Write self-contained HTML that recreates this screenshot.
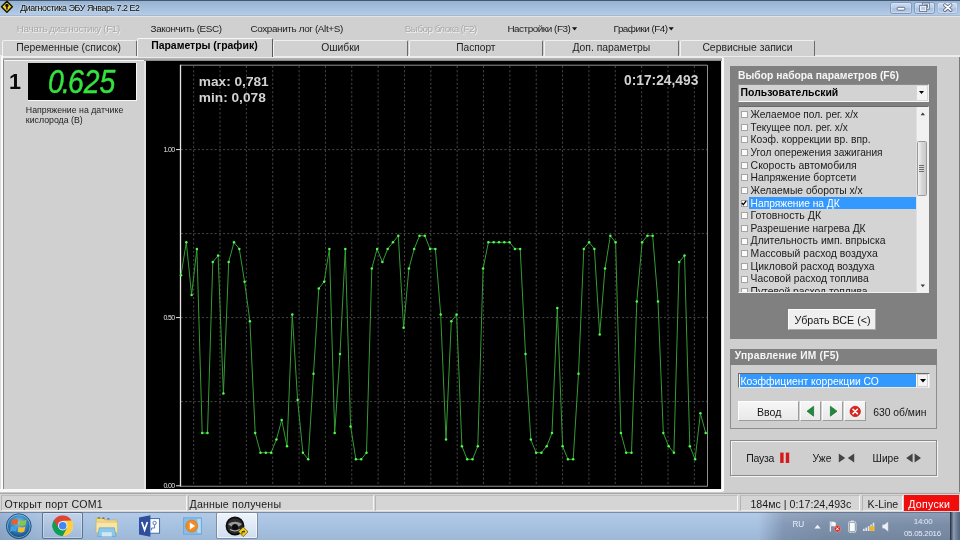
<!DOCTYPE html>
<html lang="ru"><head><meta charset="utf-8"><title>Диагностика ЭБУ Январь 7.2 E2</title>
<style>
html,body{margin:0;padding:0}
body{width:960px;height:540px;overflow:hidden;position:relative;background:#d4d4d4;font-family:"Liberation Sans",sans-serif}
#r{position:absolute;left:0;top:0;width:960px;height:540px;overflow:hidden;will-change:transform}
#r div{position:absolute;box-sizing:border-box}
#r svg{position:absolute;overflow:visible}
.t{position:absolute;white-space:nowrap;line-height:1;display:block}
</style></head>
<body><div id="r">
<div style="left:0px;top:0px;width:960px;height:17px;background:linear-gradient(#93b2d2 0%,#9fb9d8 30%,#a9c3e0 60%,#b3cde8 88%,#b3cde8 100%);"></div>
<div style="left:0px;top:0px;width:960px;height:1.2px;background:#46566f;"></div>
<div style="left:0px;top:14.9px;width:960px;height:0.9px;background:#a9b8cf;"></div>
<div style="left:0px;top:15.8px;width:960px;height:1.4px;background:#e1e4e9;"></div>
<svg style="left:0px;top:0px" width="14" height="14" viewBox="0 0 14 14"><path d="M6.9 1.2 L12.3 6.7 L6.9 12.2 L1.5 6.7 Z" fill="#f4d31f" stroke="#15130a" stroke-width="1.5" stroke-linejoin="round"/><circle cx="6.9" cy="5.4" r="1.7" fill="#15130a"/><path d="M6.9 5.6 L6.9 9.6" stroke="#15130a" stroke-width="1.5"/></svg>
<span class="t" style="left:20.20px;top:3px;font-size:8.8px;line-height:10px;color:#050505;letter-spacing:-0.417px;text-shadow:0 0 3px rgba(255,255,255,0.75),0 0 2px rgba(255,255,255,0.6);">Диагностика ЭБУ Январь 7.2 E2</span>
<div style="left:890.4px;top:2px;width:21.4px;height:11.6px;background:linear-gradient(#cddcf0,#b9cde8 48%,#a9c1e0 52%,#b6cbe7);border:1px solid #8098bd;border-radius:2.5px;box-shadow:inset 0 0 0 0.8px rgba(255,255,255,0.35)"></div>
<div style="left:913.6px;top:2px;width:21.4px;height:11.6px;background:linear-gradient(#cddcf0,#b9cde8 48%,#a9c1e0 52%,#b6cbe7);border:1px solid #8098bd;border-radius:2.5px;box-shadow:inset 0 0 0 0.8px rgba(255,255,255,0.35)"></div>
<div style="left:937.4px;top:2px;width:21px;height:11.6px;background:linear-gradient(#cddcf0,#b9cde8 48%,#a9c1e0 52%,#b6cbe7);border:1px solid #a3b6d3;border-radius:2.5px;box-shadow:inset 0 0 0 0.8px rgba(255,255,255,0.35)"></div>
<svg style="left:890px;top:2px" width="70" height="12" viewBox="0 0 70 12"><rect x="7.2" y="5.3" width="7.6" height="2.9" rx="0.9" fill="#fbfcfe" stroke="#56637a" stroke-width="0.9"/><rect x="33.2" y="1.9" width="5.2" height="4.4" fill="none" stroke="#56637a" stroke-width="2.5"/><rect x="33.2" y="1.9" width="5.2" height="4.4" fill="none" stroke="#fbfcfe" stroke-width="1"/><rect x="30.6" y="4.3" width="5.2" height="4.4" fill="#b9cce6" stroke="#56637a" stroke-width="2.5"/><rect x="30.6" y="4.3" width="5.2" height="4.4" fill="#b9cce6" stroke="#fbfcfe" stroke-width="1"/><path d="M54.8 3 L60.8 8.2 M60.8 3 L54.8 8.2" stroke="#56637a" stroke-width="3.3" stroke-linecap="round"/><path d="M54.8 3 L60.8 8.2 M60.8 3 L54.8 8.2" stroke="#fbfcfe" stroke-width="1.7" stroke-linecap="round"/></svg>
<div style="left:0px;top:17px;width:960px;height:42px;background:#d0d0d0;"></div>
<span class="t" style="left:16.80px;top:23px;font-size:9.9px;line-height:11px;color:#a9a9a9;letter-spacing:-0.380px;text-shadow:0.7px 0.7px 0 #f4f4f4;">Начать диагностику (F1)</span>
<span class="t" style="left:150.60px;top:23px;font-size:9.9px;line-height:11px;color:#1c1c1c;letter-spacing:-0.386px;">Закончить (ESC)</span>
<span class="t" style="left:250.40px;top:23px;font-size:9.9px;line-height:11px;color:#1c1c1c;letter-spacing:-0.356px;">Сохранить лог (Alt+S)</span>
<span class="t" style="left:404.80px;top:23px;font-size:9.9px;line-height:11px;color:#a9a9a9;letter-spacing:-0.533px;text-shadow:0.7px 0.7px 0 #f4f4f4;">Выбор блока (F2)</span>
<span class="t" style="left:507.40px;top:23px;font-size:9.9px;line-height:11px;color:#1c1c1c;letter-spacing:-0.448px;">Настройки (F3)</span>
<span class="t" style="left:613.60px;top:23px;font-size:9.9px;line-height:11px;color:#1c1c1c;letter-spacing:-0.509px;">Графики (F4)</span>
<svg style="left:571px;top:26px" width="110" height="6" viewBox="0 0 110 6"><path d="M1 1.2 L6.2 1.2 L3.6 4.4 Z M97.6 1.2 L102.8 1.2 L100.2 4.4 Z" fill="#111"/></svg>
<div style="left:0px;top:55.4px;width:960px;height:2.2px;background:#ececec;"></div>
<div style="left:2px;top:40px;width:134.6px;height:15.8px;background:#d1d1d1;border-left:1px solid #f2f2f2;border-top:1px solid #efefef;border-right:1.3px solid #6a6a6a;border-radius:2px 2px 0 0"></div>
<span class="t" style="left:16.20px;top:42px;font-size:10.42px;line-height:11px;color:#1e1e1e;">Переменные (список)</span>
<div style="left:273.4px;top:40px;width:134.20000000000005px;height:15.8px;background:#d1d1d1;border-left:1px solid #f2f2f2;border-top:1px solid #efefef;border-right:1.3px solid #6a6a6a;border-radius:2px 2px 0 0"></div>
<span class="t" style="left:321.20px;top:42px;font-size:10.35px;line-height:11px;color:#1e1e1e;">Ошибки</span>
<div style="left:408.6px;top:40px;width:134.39999999999998px;height:15.8px;background:#d1d1d1;border-left:1px solid #f2f2f2;border-top:1px solid #efefef;border-right:1.3px solid #6a6a6a;border-radius:2px 2px 0 0"></div>
<span class="t" style="left:456.20px;top:42px;font-size:10.19px;line-height:11px;color:#1e1e1e;">Паспорт</span>
<div style="left:544px;top:40px;width:135px;height:15.8px;background:#d1d1d1;border-left:1px solid #f2f2f2;border-top:1px solid #efefef;border-right:1.3px solid #6a6a6a;border-radius:2px 2px 0 0"></div>
<span class="t" style="left:572.40px;top:42px;font-size:10.38px;line-height:11px;color:#1e1e1e;">Доп. параметры</span>
<div style="left:680px;top:40px;width:135px;height:15.8px;background:#d1d1d1;border-left:1px solid #f2f2f2;border-top:1px solid #efefef;border-right:1.3px solid #6a6a6a;border-radius:2px 2px 0 0"></div>
<span class="t" style="left:702.40px;top:42px;font-size:10.36px;line-height:11px;color:#1e1e1e;">Сервисные записи</span>
<div style="left:137px;top:37.6px;width:136.2px;height:19.5px;background:#d2d2d2;border-left:1px solid #f6f6f6;border-top:1px solid #f6f6f6;border-right:1.3px solid #5a5a5a;border-radius:2px 2px 0 0"></div>
<span class="t" style="left:151.20px;top:40px;font-size:10.44px;line-height:11px;color:#000;font-weight:700;">Параметры (график)</span>
<div style="left:0px;top:57.6px;width:960px;height:436px;background:#e2e2e2;"></div>
<div style="left:2.6px;top:57.6px;width:719.6px;height:3.4px;background:linear-gradient(#b4b4b4,#a8a8a8 55%,#7c7c7c);"></div>
<div style="left:2.8px;top:60px;width:141.4px;height:429.6px;background:#d0d0d0;border-left:1.1px solid #8a8a8a"></div>
<div style="left:4px;top:60px;width:140px;height:1.4px;background:#f6f6f6;"></div>
<div style="left:0px;top:56px;width:1.2px;height:438px;background:#dcdcdc;"></div>
<div style="left:1.2px;top:56px;width:1.5px;height:438px;background:#fbfbfb;"></div>
<div style="left:27.6px;top:63.2px;width:109.6px;height:38.2px;background:#000;border-right:1.6px solid #f8f8f8;border-bottom:1.8px solid #f8f8f8"></div>
<span class="t" style="left:9.00px;top:70px;font-size:21.5px;line-height:24px;color:#0a0a0a;font-weight:700;">1</span>
<span class="t" style="left:48.20px;top:63px;font-size:33px;line-height:37px;color:#35e23e;font-style:italic;transform:scaleX(0.86);transform-origin:0 0;-webkit-text-stroke:0.45px #35e23e;">0<span style="margin:0 -2.2px">.</span>625</span>
<span class="t" style="left:25.80px;top:105px;font-size:8.78px;line-height:10px;color:#222;">Напряжение на датчике</span>
<span class="t" style="left:25.80px;top:115px;font-size:8.79px;line-height:10px;color:#222;">кислорода (В)</span>
<div style="left:145.7px;top:60.8px;width:575.3px;height:428.4px;background:#000;"></div>
<svg style="left:0;top:0" width="960" height="540" viewBox="0 0 960 540"><line x1="193.68" y1="66" x2="193.68" y2="485.6" stroke="#474747" stroke-width="1" stroke-dasharray="2.1 2.1"/><line x1="220.03" y1="66" x2="220.03" y2="485.6" stroke="#474747" stroke-width="1" stroke-dasharray="2.1 2.1"/><line x1="246.38" y1="66" x2="246.38" y2="485.6" stroke="#474747" stroke-width="1" stroke-dasharray="2.1 2.1"/><line x1="272.73" y1="66" x2="272.73" y2="485.6" stroke="#474747" stroke-width="1" stroke-dasharray="2.1 2.1"/><line x1="299.08" y1="66" x2="299.08" y2="485.6" stroke="#474747" stroke-width="1" stroke-dasharray="2.1 2.1"/><line x1="325.43" y1="66" x2="325.43" y2="485.6" stroke="#474747" stroke-width="1" stroke-dasharray="2.1 2.1"/><line x1="351.78" y1="66" x2="351.78" y2="485.6" stroke="#474747" stroke-width="1" stroke-dasharray="2.1 2.1"/><line x1="378.12" y1="66" x2="378.12" y2="485.6" stroke="#474747" stroke-width="1" stroke-dasharray="2.1 2.1"/><line x1="404.48" y1="66" x2="404.48" y2="485.6" stroke="#474747" stroke-width="1" stroke-dasharray="2.1 2.1"/><line x1="430.83" y1="66" x2="430.83" y2="485.6" stroke="#474747" stroke-width="1" stroke-dasharray="2.1 2.1"/><line x1="457.18" y1="66" x2="457.18" y2="485.6" stroke="#474747" stroke-width="1" stroke-dasharray="2.1 2.1"/><line x1="483.53" y1="66" x2="483.53" y2="485.6" stroke="#474747" stroke-width="1" stroke-dasharray="2.1 2.1"/><line x1="509.88" y1="66" x2="509.88" y2="485.6" stroke="#474747" stroke-width="1" stroke-dasharray="2.1 2.1"/><line x1="536.23" y1="66" x2="536.23" y2="485.6" stroke="#474747" stroke-width="1" stroke-dasharray="2.1 2.1"/><line x1="562.58" y1="66" x2="562.58" y2="485.6" stroke="#474747" stroke-width="1" stroke-dasharray="2.1 2.1"/><line x1="588.92" y1="66" x2="588.92" y2="485.6" stroke="#474747" stroke-width="1" stroke-dasharray="2.1 2.1"/><line x1="615.28" y1="66" x2="615.28" y2="485.6" stroke="#474747" stroke-width="1" stroke-dasharray="2.1 2.1"/><line x1="641.62" y1="66" x2="641.62" y2="485.6" stroke="#474747" stroke-width="1" stroke-dasharray="2.1 2.1"/><line x1="667.98" y1="66" x2="667.98" y2="485.6" stroke="#474747" stroke-width="1" stroke-dasharray="2.1 2.1"/><line x1="694.33" y1="66" x2="694.33" y2="485.6" stroke="#474747" stroke-width="1" stroke-dasharray="2.1 2.1"/><line x1="181" y1="401.60" x2="707" y2="401.60" stroke="#474747" stroke-width="1" stroke-dasharray="2.1 2.1"/><line x1="181" y1="317.60" x2="707" y2="317.60" stroke="#474747" stroke-width="1" stroke-dasharray="2.1 2.1"/><line x1="181" y1="233.60" x2="707" y2="233.60" stroke="#474747" stroke-width="1" stroke-dasharray="2.1 2.1"/><line x1="181" y1="149.60" x2="707" y2="149.60" stroke="#474747" stroke-width="1" stroke-dasharray="2.1 2.1"/><path d="M180.5 65.2 L707.5 65.2 L707.5 486.25 L180.5 486.25" fill="none" stroke="#909090" stroke-width="1"/><line x1="180.5" y1="64.8" x2="180.5" y2="486.6" stroke="#e6e6e6" stroke-width="1.3"/><line x1="176" y1="149.6" x2="180.5" y2="149.6" stroke="#e6e6e6" stroke-width="1"/><line x1="176" y1="317.6" x2="180.5" y2="317.6" stroke="#e6e6e6" stroke-width="1"/><line x1="176" y1="485.8" x2="180.5" y2="485.8" stroke="#e6e6e6" stroke-width="1"/><polyline fill="none" stroke="#38a238" stroke-width="0.95" stroke-linejoin="round" points="181.0,275.2 186.3,242.3 191.6,294.9 196.9,248.9 202.2,433.0 207.5,433.0 212.8,262.1 218.1,255.5 223.4,393.6 228.7,262.1 234.0,242.3 239.3,248.9 244.6,281.8 249.9,321.2 255.2,433.0 260.5,452.7 265.8,452.7 271.1,452.7 276.4,439.6 281.7,419.9 287.0,446.2 292.3,314.6 297.6,400.1 302.9,452.7 308.2,459.3 313.5,373.8 318.8,288.4 324.1,281.8 329.4,248.9 334.7,433.0 340.0,354.1 345.3,248.9 350.6,426.4 355.9,459.3 361.2,459.3 366.5,452.7 371.8,268.6 377.1,248.9 382.4,262.1 387.7,248.9 393.0,242.3 398.3,235.8 403.6,327.8 408.9,268.6 414.2,248.9 419.5,235.8 424.8,235.8 430.1,248.9 435.4,248.9 440.7,314.6 446.0,439.6 451.3,321.2 456.6,314.6 461.9,446.2 467.2,459.3 472.5,459.3 477.8,446.2 483.1,268.6 488.4,242.3 493.7,242.3 499.0,242.3 504.3,242.3 509.6,242.3 514.9,248.9 520.2,248.9 525.5,354.1 530.8,439.6 536.1,452.7 541.4,452.7 546.7,446.2 552.0,433.0 557.3,308.1 562.6,446.2 567.9,459.3 573.2,459.3 578.5,373.8 583.8,248.9 589.1,242.3 594.4,248.9 599.7,334.4 605.0,268.6 610.3,235.8 615.6,242.3 620.9,433.0 626.2,452.7 631.5,452.7 636.8,301.5 642.1,242.3 647.4,235.8 652.7,235.8 658.0,301.5 663.3,433.0 668.6,446.2 673.9,452.7 679.2,262.1 684.5,255.5 689.8,446.2 695.1,459.3 700.4,413.3 705.7,433.0"/><g fill="#4dff4d"><circle cx="181.0" cy="275.2" r="1.25"/><circle cx="186.3" cy="242.3" r="1.25"/><circle cx="191.6" cy="294.9" r="1.25"/><circle cx="196.9" cy="248.9" r="1.25"/><circle cx="202.2" cy="433.0" r="1.25"/><circle cx="207.5" cy="433.0" r="1.25"/><circle cx="212.8" cy="262.1" r="1.25"/><circle cx="218.1" cy="255.5" r="1.25"/><circle cx="223.4" cy="393.6" r="1.25"/><circle cx="228.7" cy="262.1" r="1.25"/><circle cx="234.0" cy="242.3" r="1.25"/><circle cx="239.3" cy="248.9" r="1.25"/><circle cx="244.6" cy="281.8" r="1.25"/><circle cx="249.9" cy="321.2" r="1.25"/><circle cx="255.2" cy="433.0" r="1.25"/><circle cx="260.5" cy="452.7" r="1.25"/><circle cx="265.8" cy="452.7" r="1.25"/><circle cx="271.1" cy="452.7" r="1.25"/><circle cx="276.4" cy="439.6" r="1.25"/><circle cx="281.7" cy="419.9" r="1.25"/><circle cx="287.0" cy="446.2" r="1.25"/><circle cx="292.3" cy="314.6" r="1.25"/><circle cx="297.6" cy="400.1" r="1.25"/><circle cx="302.9" cy="452.7" r="1.25"/><circle cx="308.2" cy="459.3" r="1.25"/><circle cx="313.5" cy="373.8" r="1.25"/><circle cx="318.8" cy="288.4" r="1.25"/><circle cx="324.1" cy="281.8" r="1.25"/><circle cx="329.4" cy="248.9" r="1.25"/><circle cx="334.7" cy="433.0" r="1.25"/><circle cx="340.0" cy="354.1" r="1.25"/><circle cx="345.3" cy="248.9" r="1.25"/><circle cx="350.6" cy="426.4" r="1.25"/><circle cx="355.9" cy="459.3" r="1.25"/><circle cx="361.2" cy="459.3" r="1.25"/><circle cx="366.5" cy="452.7" r="1.25"/><circle cx="371.8" cy="268.6" r="1.25"/><circle cx="377.1" cy="248.9" r="1.25"/><circle cx="382.4" cy="262.1" r="1.25"/><circle cx="387.7" cy="248.9" r="1.25"/><circle cx="393.0" cy="242.3" r="1.25"/><circle cx="398.3" cy="235.8" r="1.25"/><circle cx="403.6" cy="327.8" r="1.25"/><circle cx="408.9" cy="268.6" r="1.25"/><circle cx="414.2" cy="248.9" r="1.25"/><circle cx="419.5" cy="235.8" r="1.25"/><circle cx="424.8" cy="235.8" r="1.25"/><circle cx="430.1" cy="248.9" r="1.25"/><circle cx="435.4" cy="248.9" r="1.25"/><circle cx="440.7" cy="314.6" r="1.25"/><circle cx="446.0" cy="439.6" r="1.25"/><circle cx="451.3" cy="321.2" r="1.25"/><circle cx="456.6" cy="314.6" r="1.25"/><circle cx="461.9" cy="446.2" r="1.25"/><circle cx="467.2" cy="459.3" r="1.25"/><circle cx="472.5" cy="459.3" r="1.25"/><circle cx="477.8" cy="446.2" r="1.25"/><circle cx="483.1" cy="268.6" r="1.25"/><circle cx="488.4" cy="242.3" r="1.25"/><circle cx="493.7" cy="242.3" r="1.25"/><circle cx="499.0" cy="242.3" r="1.25"/><circle cx="504.3" cy="242.3" r="1.25"/><circle cx="509.6" cy="242.3" r="1.25"/><circle cx="514.9" cy="248.9" r="1.25"/><circle cx="520.2" cy="248.9" r="1.25"/><circle cx="525.5" cy="354.1" r="1.25"/><circle cx="530.8" cy="439.6" r="1.25"/><circle cx="536.1" cy="452.7" r="1.25"/><circle cx="541.4" cy="452.7" r="1.25"/><circle cx="546.7" cy="446.2" r="1.25"/><circle cx="552.0" cy="433.0" r="1.25"/><circle cx="557.3" cy="308.1" r="1.25"/><circle cx="562.6" cy="446.2" r="1.25"/><circle cx="567.9" cy="459.3" r="1.25"/><circle cx="573.2" cy="459.3" r="1.25"/><circle cx="578.5" cy="373.8" r="1.25"/><circle cx="583.8" cy="248.9" r="1.25"/><circle cx="589.1" cy="242.3" r="1.25"/><circle cx="594.4" cy="248.9" r="1.25"/><circle cx="599.7" cy="334.4" r="1.25"/><circle cx="605.0" cy="268.6" r="1.25"/><circle cx="610.3" cy="235.8" r="1.25"/><circle cx="615.6" cy="242.3" r="1.25"/><circle cx="620.9" cy="433.0" r="1.25"/><circle cx="626.2" cy="452.7" r="1.25"/><circle cx="631.5" cy="452.7" r="1.25"/><circle cx="636.8" cy="301.5" r="1.25"/><circle cx="642.1" cy="242.3" r="1.25"/><circle cx="647.4" cy="235.8" r="1.25"/><circle cx="652.7" cy="235.8" r="1.25"/><circle cx="658.0" cy="301.5" r="1.25"/><circle cx="663.3" cy="433.0" r="1.25"/><circle cx="668.6" cy="446.2" r="1.25"/><circle cx="673.9" cy="452.7" r="1.25"/><circle cx="679.2" cy="262.1" r="1.25"/><circle cx="684.5" cy="255.5" r="1.25"/><circle cx="689.8" cy="446.2" r="1.25"/><circle cx="695.1" cy="459.3" r="1.25"/><circle cx="700.4" cy="413.3" r="1.25"/><circle cx="705.7" cy="433.0" r="1.25"/></g></svg>
<span class="t" style="left:198.80px;top:74px;font-size:13.68px;line-height:15px;color:#d2d2d2;font-weight:700;">max: 0,781</span>
<span class="t" style="left:198.80px;top:90px;font-size:13.7px;line-height:15px;color:#d2d2d2;font-weight:700;">min: 0,078</span>
<span class="t" style="left:624.00px;top:73px;font-size:13.79px;line-height:15px;color:#d2d2d2;font-weight:700;">0:17:24,493</span>
<span class="t" style="left:163.40px;top:146px;font-size:7px;line-height:7px;color:#e4e4e4;letter-spacing:-0.606px;">1.00</span>
<span class="t" style="left:163.40px;top:314px;font-size:7px;line-height:7px;color:#e4e4e4;letter-spacing:-0.606px;">0.50</span>
<span class="t" style="left:163.40px;top:482px;font-size:7px;line-height:7px;color:#e4e4e4;letter-spacing:-0.606px;">0.00</span>
<div style="left:722.4px;top:57.6px;width:1.8px;height:433px;background:#fbfbfb;"></div>
<div style="left:724.2px;top:57.4px;width:235.8px;height:437px;background:#cfcfcf;border-right:1.4px solid #7a7a7a"></div>
<div style="left:730.1px;top:66px;width:206.7px;height:272.6px;background:#808080;"></div>
<span class="t" style="left:738.00px;top:70px;font-size:10.34px;line-height:11px;color:#f6f6f6;font-weight:700;">Выбор набора параметров (F6)</span>
<div style="left:738.2px;top:84px;width:190.4px;height:17.8px;background:#d3d3d3;border-bottom:1px solid #fafafa;border-right:1px solid #f0f0f0;border-top:0.6px solid #8c8c8c;border-left:0.6px solid #9a9a9a"></div>
<span class="t" style="left:740.60px;top:87px;font-size:10.41px;line-height:11px;color:#000;font-weight:700;">Пользовательский</span>
<div style="left:915.8px;top:85.2px;width:11.8px;height:15.4px;background:#f3f3f3;border:1px solid #d6d6d6"></div>
<svg style="left:919.2px;top:91.4px" width="5" height="4" viewBox="0 0 5 4"><path d="M0 0 L5 0 L2.5 3 Z" fill="#000"/></svg>
<div style="left:738px;top:106.2px;width:191px;height:187px;background:#d4d4d4;border:1px solid #f0f0f0;border-top-color:#6a6a6a;border-left-color:#8a8a8a"></div>
<div style="left:739px;top:107.2px;width:177px;height:185px;overflow:hidden">
<div style="left:1.6px;top:3.90px;width:7px;height:7px;background:#fbfbfb;border:0.8px solid #a4a4a4"></div>
<span class="t" style="left:11.60px;top:2px;font-size:10.14px;line-height:11px;color:#1a1a1a;">Желаемое пол. рег. х/х</span>
<div style="left:1.6px;top:16.56px;width:7px;height:7px;background:#fbfbfb;border:0.8px solid #a4a4a4"></div>
<span class="t" style="left:11.60px;top:15px;font-size:10.05px;line-height:11px;color:#1a1a1a;">Текущее пол. рег. х/х</span>
<div style="left:1.6px;top:29.22px;width:7px;height:7px;background:#fbfbfb;border:0.8px solid #a4a4a4"></div>
<span class="t" style="left:11.60px;top:27px;font-size:10.31px;line-height:11px;color:#1a1a1a;">Коэф. коррекции вр. впр.</span>
<div style="left:1.6px;top:41.88px;width:7px;height:7px;background:#fbfbfb;border:0.8px solid #a4a4a4"></div>
<span class="t" style="left:11.60px;top:40px;font-size:10.14px;line-height:11px;color:#1a1a1a;">Угол опережения зажигания</span>
<div style="left:1.6px;top:54.54px;width:7px;height:7px;background:#fbfbfb;border:0.8px solid #a4a4a4"></div>
<span class="t" style="left:11.60px;top:53px;font-size:10.44px;line-height:11px;color:#1a1a1a;">Скорость автомобиля</span>
<div style="left:1.6px;top:67.20px;width:7px;height:7px;background:#fbfbfb;border:0.8px solid #a4a4a4"></div>
<span class="t" style="left:11.60px;top:65px;font-size:10.33px;line-height:11px;color:#1a1a1a;">Напряжение бортсети</span>
<div style="left:1.6px;top:79.86px;width:7px;height:7px;background:#fbfbfb;border:0.8px solid #a4a4a4"></div>
<span class="t" style="left:11.60px;top:78px;font-size:10.31px;line-height:11px;color:#1a1a1a;">Желаемые обороты х/х</span>
<div style="left:10.4px;top:89.62px;width:166.2px;height:12.6px;background:#3399ff"></div>
<div style="left:1.6px;top:92.52px;width:7px;height:7px;background:#fbfbfb;border:0.8px solid #a4a4a4"></div>
<svg style="left:2.4px;top:93.12px" width="6" height="6" viewBox="0 0 6 6"><path d="M0.8 2.8 L2.3 4.6 L5.2 0.9" fill="none" stroke="#000" stroke-width="1.3"/></svg>
<span class="t" style="left:11.60px;top:91px;font-size:10.22px;line-height:11px;color:#fff;">Напряжение на ДК</span>
<div style="left:1.6px;top:105.18px;width:7px;height:7px;background:#fbfbfb;border:0.8px solid #a4a4a4"></div>
<span class="t" style="left:11.60px;top:102px;font-size:10.58px;line-height:12px;color:#1a1a1a;">Готовность ДК</span>
<div style="left:1.6px;top:117.84px;width:7px;height:7px;background:#fbfbfb;border:0.8px solid #a4a4a4"></div>
<span class="t" style="left:11.60px;top:116px;font-size:10.23px;line-height:11px;color:#1a1a1a;">Разрешение нагрева ДК</span>
<div style="left:1.6px;top:130.50px;width:7px;height:7px;background:#fbfbfb;border:0.8px solid #a4a4a4"></div>
<span class="t" style="left:11.60px;top:128px;font-size:10.42px;line-height:11px;color:#1a1a1a;">Длительность имп. впрыска</span>
<div style="left:1.6px;top:143.16px;width:7px;height:7px;background:#fbfbfb;border:0.8px solid #a4a4a4"></div>
<span class="t" style="left:11.60px;top:141px;font-size:10.44px;line-height:11px;color:#1a1a1a;">Массовый расход воздуха</span>
<div style="left:1.6px;top:155.82px;width:7px;height:7px;background:#fbfbfb;border:0.8px solid #a4a4a4"></div>
<span class="t" style="left:11.60px;top:154px;font-size:10.4px;line-height:11px;color:#1a1a1a;">Цикловой расход воздуха</span>
<div style="left:1.6px;top:168.48px;width:7px;height:7px;background:#fbfbfb;border:0.8px solid #a4a4a4"></div>
<span class="t" style="left:11.60px;top:166px;font-size:10.31px;line-height:11px;color:#1a1a1a;">Часовой расход топлива</span>
<div style="left:1.6px;top:181.14px;width:7px;height:7px;background:#fbfbfb;border:0.8px solid #a4a4a4"></div>
<span class="t" style="left:11.60px;top:179px;font-size:10.28px;line-height:11px;color:#1a1a1a;">Путевой расход топлива</span>
</div>
<div style="left:916.4px;top:107.2px;width:11.6px;height:185px;background:#f1f1f1;border-left:1px solid #e0e0e0"></div>
<svg style="left:916px;top:107px" width="12" height="184" viewBox="0 0 12 184"><path d="M4.6 8.2 L6.8 5.4 L9 8.2 Z M4.6 177.4 L9 177.4 L6.8 180.2 Z" fill="#3a3a3a"/></svg>
<div style="left:916.6px;top:140.6px;width:10.2px;height:55.6px;background:linear-gradient(90deg,#f2f2f2,#d6d6d6 50%,#cacaca);border:1px solid #9a9a9a;border-radius:1.5px"></div>
<div style="left:919.2px;top:165.4px;width:5px;height:0.8px;background:#6e6e6e;"></div>
<div style="left:919.2px;top:167.2px;width:5px;height:0.8px;background:#6e6e6e;"></div>
<div style="left:919.2px;top:169px;width:5px;height:0.8px;background:#6e6e6e;"></div>
<div style="left:919.2px;top:170.8px;width:5px;height:0.8px;background:#6e6e6e;"></div>
<div style="left:788px;top:308.6px;width:87.6px;height:21px;background:#efefef;border:1px solid #fcfcfc;border-right-color:#a8a8a8;border-bottom-color:#a8a8a8"></div>
<span class="t" style="left:794.60px;top:314px;font-size:10.73px;line-height:12px;color:#161616;">Убрать ВСЕ (&lt;)</span>
<div style="left:730.1px;top:349.2px;width:206.7px;height:79.8px;background:#cfcfcf;border:1px solid #8e8e8e"></div>
<div style="left:730.1px;top:349.2px;width:206.7px;height:15.4px;background:#808080;"></div>
<span class="t" style="left:734.80px;top:350px;font-size:10.2px;line-height:11px;color:#f6f6f6;font-weight:700;letter-spacing:0.224px;">Управление ИМ (F5)</span>
<div style="left:738px;top:372.8px;width:191.6px;height:15.6px;background:#fafafa;border:1px solid #6a6a6a;border-right-color:#e8e8e8;border-bottom-color:#e8e8e8"></div>
<div style="left:739.6px;top:374.4px;width:176.6px;height:12.4px;background:#3399ff;"></div>
<span class="t" style="left:740.40px;top:376px;font-size:10.35px;line-height:11px;color:#fff;">Коэффициент коррекции СО</span>
<div style="left:917px;top:374.2px;width:11.4px;height:12.8px;background:#f4f4f4;border:1px solid #cfcfcf"></div>
<svg style="left:919.8px;top:379.4px" width="6" height="4" viewBox="0 0 6 4"><path d="M0 0 L6 0 L3 3.4 Z" fill="#000"/></svg>
<div style="left:738px;top:401.2px;width:60.8px;height:19.4px;background:linear-gradient(#f6f6f6,#e9e9e9);border:1px solid #fdfdfd;border-right-color:#9c9c9c;border-bottom-color:#9c9c9c"></div>
<span class="t" style="left:757.00px;top:406px;font-size:10.59px;line-height:12px;color:#161616;">Ввод</span>
<div style="left:800px;top:401.2px;width:21.4px;height:19.4px;background:linear-gradient(#f6f6f6,#e9e9e9);border:1px solid #fdfdfd;border-right-color:#9c9c9c;border-bottom-color:#9c9c9c"></div>
<div style="left:822px;top:401.2px;width:21.4px;height:19.4px;background:linear-gradient(#f6f6f6,#e9e9e9);border:1px solid #fdfdfd;border-right-color:#9c9c9c;border-bottom-color:#9c9c9c"></div>
<div style="left:844.2px;top:401.2px;width:22px;height:19.4px;background:linear-gradient(#f6f6f6,#e9e9e9);border:1px solid #fdfdfd;border-right-color:#9c9c9c;border-bottom-color:#9c9c9c"></div>
<svg style="left:800px;top:401px" width="68" height="20" viewBox="0 0 68 20"><path d="M13.6 5.2 L13.6 15.2 L7 10.2 Z" fill="#1f8a3c" stroke="#0f5f28" stroke-width="0.6"/><path d="M30.4 5.2 L30.4 15.2 L37 10.2 Z" fill="#1f8a3c" stroke="#0f5f28" stroke-width="0.6"/><circle cx="55.2" cy="10.4" r="5.2" fill="#e02020" stroke="#b01010" stroke-width="0.7"/><path d="M53 8.2 L57.4 12.6 M57.4 8.2 L53 12.6" stroke="#fff" stroke-width="1.5" stroke-linecap="round"/></svg>
<span class="t" style="left:873.20px;top:407px;font-size:10.34px;line-height:11px;color:#161616;">630 об/мин</span>
<div style="left:730.1px;top:440px;width:206.7px;height:36.4px;background:#cfcfcf;border:1px solid #8a8a8a;box-shadow:inset 1px 1px 0 #f4f4f4, 1px 1px 0 #f4f4f4"></div>
<span class="t" style="left:746.20px;top:452px;font-size:10.5px;line-height:12px;color:#161616;letter-spacing:-0.277px;">Пауза</span>
<span class="t" style="left:812.60px;top:453px;font-size:10.29px;line-height:11px;color:#161616;">Уже</span>
<span class="t" style="left:872.60px;top:453px;font-size:10.2px;line-height:11px;color:#161616;">Шире</span>
<svg style="left:778px;top:450px" width="146" height="16" viewBox="0 0 146 16"><rect x="2.2" y="2.6" width="3.4" height="10.4" fill="#d81818"/><rect x="7.8" y="2.6" width="3.4" height="10.4" fill="#d81818"/><path d="M60.8 3.4 L60.8 12.6 L67.2 8 Z M76.2 3.4 L76.2 12.6 L69.8 8 Z" fill="#444"/><path d="M134.6 3.4 L134.6 12.6 L128.2 8 Z M136.6 3.4 L136.6 12.6 L143 8 Z" fill="#444"/></svg>
<div style="left:0px;top:489.2px;width:722px;height:2.6px;background:#f8f8f8;"></div>
<div style="left:0px;top:491.8px;width:960px;height:1.4px;background:#cacaca;"></div>
<div style="left:0px;top:493.2px;width:960px;height:1.1px;background:#a6a6a6;"></div>
<div style="left:0px;top:494.2px;width:960px;height:17.6px;background:#d5d5d5;"></div>
<div style="left:0.5px;top:494.6px;width:186.5px;height:16.8px;background:#d5d5d5;border-top:1px solid #bcbcbc;border-left:1px solid #b4b4b4;border-right:1px solid #f6f6f6;border-bottom:1px solid #ececec"></div>
<div style="left:188px;top:494.6px;width:186.39999999999998px;height:16.8px;background:#d5d5d5;border-top:1px solid #bcbcbc;border-left:1px solid #b4b4b4;border-right:1px solid #f6f6f6;border-bottom:1px solid #ececec"></div>
<div style="left:375px;top:494.6px;width:363.4px;height:16.8px;background:#d5d5d5;border-top:1px solid #bcbcbc;border-left:1px solid #b4b4b4;border-right:1px solid #f6f6f6;border-bottom:1px solid #ececec"></div>
<div style="left:740px;top:494.6px;width:120.39999999999998px;height:16.8px;background:#d5d5d5;border-top:1px solid #bcbcbc;border-left:1px solid #b4b4b4;border-right:1px solid #f6f6f6;border-bottom:1px solid #ececec"></div>
<div style="left:862px;top:494.6px;width:41px;height:16.8px;background:#d5d5d5;border-top:1px solid #bcbcbc;border-left:1px solid #b4b4b4;border-right:1px solid #f6f6f6;border-bottom:1px solid #ececec"></div>
<div style="left:904.4px;top:495px;width:54.6px;height:16.4px;background:#f20d0d;"></div>
<span class="t" style="left:4.60px;top:498px;font-size:10.6px;line-height:12px;color:#1a1a1a;letter-spacing:0.230px;">Открыт порт COM1</span>
<span class="t" style="left:189.60px;top:498px;font-size:10.6px;line-height:12px;color:#1a1a1a;letter-spacing:0.175px;">Данные получены</span>
<span class="t" style="left:750.40px;top:498px;font-size:10.6px;line-height:12px;color:#1a1a1a;letter-spacing:0.042px;">184мс | 0:17:24,493с</span>
<span class="t" style="left:867.60px;top:498px;font-size:10.6px;line-height:12px;color:#1a1a1a;letter-spacing:-0.004px;">K-Line</span>
<span class="t" style="left:908.20px;top:498px;font-size:10.6px;line-height:12px;color:#fff;letter-spacing:0.292px;">Допуски</span>
<div style="left:0px;top:511.6px;width:960px;height:28.4px;background:linear-gradient(90deg,#8ea9cb 0%,#a0bbdc 4%,#a6c1e1 9%,#a6c1e1 79%,#8398b6 81.6%,#7b8faa 86%,#788ba6 100%);"></div>
<div style="left:0px;top:511.6px;width:960px;height:28.4px;background:linear-gradient(rgba(255,255,255,0.16),rgba(255,255,255,0.02) 45%,rgba(0,0,0,0.05));"></div>
<div style="left:0px;top:511.6px;width:960px;height:1px;background:rgba(70,90,120,0.55);"></div>
<svg style="left:5px;top:513px" width="28" height="27" viewBox="0 0 28 27"><defs><radialGradient id="orb" cx="50%" cy="35%" r="70%"><stop offset="0" stop-color="#7cc4ee"/><stop offset="0.55" stop-color="#2a78b8"/><stop offset="1" stop-color="#123a66"/></radialGradient></defs><circle cx="13.8" cy="13.2" r="12.4" fill="url(#orb)" stroke="#24466e" stroke-width="0.8"/><circle cx="13.8" cy="13.2" r="11.4" fill="none" stroke="rgba(170,225,250,0.55)" stroke-width="1"/><g transform="translate(13.8 13.2) scale(1.16) translate(-13.5 -14)"><path d="M7.6 8.6 Q10.4 7 13 8.4 L12.2 12.8 Q9.6 11.6 6.8 13 Z" fill="#e8602a"/><path d="M14.4 8.6 Q17.2 10 20.2 8.4 L19.4 12.8 Q16.6 14.2 13.6 12.9 Z" fill="#8cc63f"/><path d="M6.5 14.4 Q9.4 13 12 14.3 L11.2 18.6 Q8.6 17.4 5.8 18.8 Z" fill="#3fa0dc"/><path d="M13.3 14.5 Q16.2 15.8 19.1 14.3 L18.3 18.6 Q15.4 20 12.5 18.7 Z" fill="#f6c02a"/></g></svg>
<div style="left:42px;top:512.4px;width:41.2px;height:26.6px;background:linear-gradient(rgba(255,255,255,0.2),rgba(255,255,255,0.03));border:1px solid rgba(85,100,128,0.85);border-radius:2px;box-shadow:inset 0 0 0 1px rgba(255,255,255,0.3)"></div>
<svg style="left:51.6px;top:515.2px" width="21.4" height="21.4" viewBox="0 0 48 48"><circle cx="24" cy="24" r="23" fill="#fff"/><path d="M24 24 L4.08 12.5 A23 23 0 0 1 43.92 12.5 Z" fill="#db4437"/><path d="M24 24 L43.92 12.5 A23 23 0 0 1 24 47 Z" fill="#ffcd40"/><path d="M24 24 L24 47 A23 23 0 0 1 4.08 12.5 Z" fill="#0f9d58"/><path d="M24 13 L43.6 13 A23 23 0 0 0 4.08 12.5 L13.5 28.8 Z" fill="#db4437"/><path d="M33.5 29.5 L24 47 A23 23 0 0 0 43.9 12.6 L24 13 Z" fill="#ffcd40"/><path d="M14.5 29.5 L4.08 12.5 A23 23 0 0 0 24 47 L33.5 29.5 Z" fill="#0f9d58"/><circle cx="24" cy="24" r="10.6" fill="#f1f1f1"/><circle cx="24" cy="24" r="8.4" fill="#4285f4"/></svg>
<svg style="left:95px;top:515px" width="24" height="23" viewBox="0 0 24 23"><path d="M1.2 3.4 L8.4 3.4 L10 5 L22 5 L22 17.4 L1.2 17.4 Z" fill="#f3d88c" stroke="#c9a94e" stroke-width="0.6"/><rect x="2.8" y="2" width="2.2" height="1.8" fill="#5aa83a"/><rect x="7.4" y="2.4" width="2" height="1.6" fill="#d34a3a"/><rect x="12.4" y="3" width="2" height="1.6" fill="#3f7fc8"/><path d="M1.2 7.2 L22.4 7.2 L22.4 17.6 L1.2 17.6 Z" fill="#f7e6a8" stroke="#d4b75e" stroke-width="0.5"/><path d="M4.2 12.8 L19.4 12.8 L21 21.4 L2.6 21.4 Z" fill="#8cc8e8" stroke="#5b9cc4" stroke-width="0.6"/><rect x="6.8" y="17.2" width="10" height="4.2" fill="#cfe8f6"/></svg>
<svg style="left:138px;top:514px" width="24" height="24" viewBox="0 0 24 24"><rect x="10" y="4.6" width="11.6" height="14.6" fill="#fafcff" stroke="#3a5fa8" stroke-width="0.9"/><circle cx="16.6" cy="9" r="1.7" fill="none" stroke="#3a5fa8" stroke-width="0.8"/><path d="M16.6 10.8 L16.6 14 L13.6 14 L13.6 16.4" fill="none" stroke="#3a5fa8" stroke-width="0.8"/><path d="M1 3.6 L12.4 1.2 L12.4 22.8 L1 20.4 Z" fill="#2f4f9e"/><path d="M3.8 8 L6.6 16 L9.4 8" fill="none" stroke="#fff" stroke-width="1.7"/></svg>
<svg style="left:182px;top:516px" width="21" height="20" viewBox="0 0 21 20"><rect x="1.6" y="1.8" width="18" height="16.4" fill="#86bde8" stroke="#62a2d6" stroke-width="0.7"/><rect x="15.4" y="3" width="3.4" height="14" fill="#b5daf4"/><circle cx="9.7" cy="10" r="6" fill="#f08c26" stroke="#da7414" stroke-width="0.7"/><path d="M7.8 6.6 L13.2 10 L7.8 13.4 Z" fill="#fff"/></svg>
<div style="left:216.4px;top:512.4px;width:41.2px;height:26.6px;background:linear-gradient(rgba(255,255,255,0.78),rgba(240,246,252,0.6));border:1px solid rgba(90,110,140,0.75);border-radius:2px;box-shadow:inset 0 0 0 1px rgba(255,255,255,0.6)"></div>
<svg style="left:224px;top:515px" width="26" height="23" viewBox="0 0 26 23"><circle cx="11" cy="11" r="8.6" fill="#2a2a2a" stroke="#0a0a0a" stroke-width="1.6"/><path d="M4 9 Q11 4.6 18 9 L15 11.4 Q11 9.6 7 11.4 Z" fill="#9a9a9a"/><circle cx="11" cy="12" r="3" fill="#0c0c0c"/><path d="M6 14.6 Q11 17.4 16 14.6" fill="none" stroke="#b8b8b8" stroke-width="1.2"/><path d="M19.2 12 L24 16.8 L19.2 21.6 L14.4 16.8 Z" fill="#f6d21e" stroke="#4a3c00" stroke-width="0.7"/><path d="M18 19.2 L18 16.6 L20.6 16.6 M19.6 15.4 L20.9 16.6 L19.6 17.8" fill="none" stroke="#111" stroke-width="0.8"/></svg>
<span class="t" style="left:792.60px;top:520px;font-size:8.2px;line-height:9px;color:#e8eef6;letter-spacing:-0.214px;">RU</span>
<svg style="left:812px;top:514px" width="82" height="24" viewBox="0 0 82 24"><path d="M2.4 14.6 L5.5 10.8 L8.6 14.6 Z" fill="#eef2f8"/><path d="M18.4 7.6 L18.4 17.4" stroke="#e9edf3" stroke-width="1.2"/><path d="M19 7.8 Q20.6 7 22 7.8 Q23 8.4 24 8 L24 12.6 Q23 13 22 12.4 Q20.6 11.8 19 12.6 Z" fill="#f6f8fa" stroke="#8a96a8" stroke-width="0.4"/><circle cx="25.4" cy="14.8" r="3.2" fill="#d22a22" stroke="#f0d0d0" stroke-width="0.4"/><path d="M24 13.4 L26.8 16.2 M26.8 13.4 L24 16.2" stroke="#fff" stroke-width="1"/><rect x="37" y="8" width="6.6" height="10" rx="1.4" fill="#f7f9fb" stroke="#e4e9f0" stroke-width="1.6"/><rect x="37.3" y="8.3" width="6" height="9.4" rx="1.1" fill="#f7f9fb" stroke="#5f6b7e" stroke-width="0.7"/><rect x="38.8" y="6.6" width="3" height="1.4" fill="#e4e9f0"/><rect x="51" y="14.8" width="1.7" height="2.2" fill="#dfe5ee"/><rect x="53.4" y="13.6" width="1.7" height="3.4" fill="#dfe5ee"/><rect x="55.8" y="12.2" width="1.7" height="4.8" fill="#dfe5ee"/><rect x="58.2" y="10.6" width="1.7" height="6.4" fill="#dfe5ee"/><rect x="60.6" y="8.8" width="1.7" height="8.2" fill="#dfe5ee"/><circle cx="59.8" cy="14.6" r="2.7" fill="#f0b428"/><path d="M70.2 10.6 L72.4 10.6 L76.2 7.4 L76.2 17.8 L72.4 14.6 L70.2 14.6 Z" fill="#eef1f6" stroke="#8793a6" stroke-width="0.4"/></svg>
<span class="t" style="left:913.80px;top:517px;font-size:7.9px;line-height:9px;color:#e6edf7;letter-spacing:-0.230px;">14:00</span>
<span class="t" style="left:904.00px;top:529px;font-size:7.9px;line-height:9px;color:#e6edf7;letter-spacing:-0.270px;">05.05.2016</span>
<div style="left:949.6px;top:511.6px;width:10.4px;height:28.4px;background:linear-gradient(90deg,#3c4a5e,#8e9db2 30%,#6e7f98 60%,#54647c);border-left:1px solid #2e3a4c"></div>
</div></body></html>
